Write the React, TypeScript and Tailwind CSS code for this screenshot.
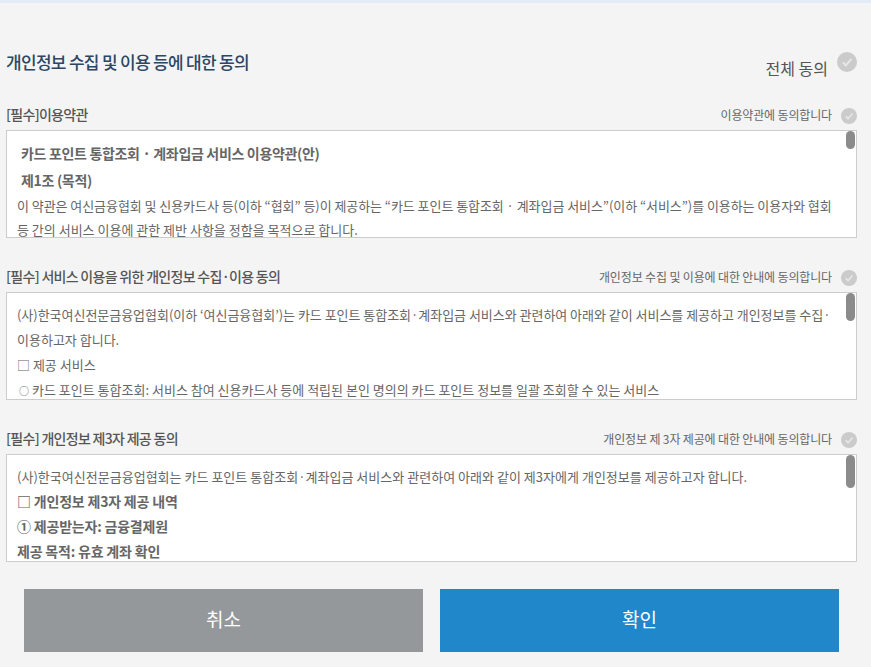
const font = "font-['Noto_Sans_CJK_KR','Noto_Sans',sans-serif]";

function CheckIcon({ big }: { big?: boolean }) {
  return (
    <svg className={big ? 'w-5 h-5' : 'w-4 h-4 mt-[2px]'} viewBox="0 0 20 20">
      <circle cx="10" cy="10" r="10" fill="#cbcbcb" />
      <path d="M5.8 10.2l3 3.2 5.6-6.6" fill="none" stroke="#e6e6e6" strokeWidth="2" />
    </svg>
  );
}

function Section({
  title,
  agree,
  thumb,
  children,
}: {
  title: string;
  agree: string;
  thumb: string;
  children: React.ReactNode;
}) {
  return (
    <section className="h-[162px]">
      <div className="h-[30px] flex items-center justify-between pr-[14px] pb-[1px]">
        <h3 className="text-[14px] font-medium tracking-[-0.7px] text-[#555]">{title}</h3>
        <div className="flex items-center gap-[9px]">
          <span className="text-[12px] tracking-[-0.15px] text-[#666]">{agree}</span>
          <CheckIcon />
        </div>
      </div>
      <div className="relative h-[108px] mr-[14px] bg-white border border-[#cccccc] overflow-hidden text-[13px] text-[#666] leading-[25px]">
        <div className={`absolute top-0 right-[1px] w-[9px] rounded-full bg-[#8b8b8b] ${thumb}`} />
        {children}
      </div>
    </section>
  );
}

export default function App() {
  return (
    <div className={`w-[871px] h-[667px] bg-[#f4f4f4] overflow-hidden pl-[6px] border-t-[3px] border-[#e3ebf7] ${font}`}>
      <div className="h-[97px] flex justify-between pr-[14px]">
        <h2 className="mt-[45px] text-[17px] font-medium leading-[28px] tracking-[-0.7px] text-[#2c4664]">
          개인정보 수집 및 이용 등에 대한 동의
        </h2>
        <div className="mt-[47px] h-[24px] flex items-center gap-[9px]">
          <span className="mt-[11px] text-[16px] text-[#555]">전체 동의</span>
          <CheckIcon big />
        </div>
      </div>
      <Section title="[필수]이용약관" agree="이용약관에 동의합니다" thumb="h-[18px]">
        <div className="pl-[14px] pt-[9px] font-bold text-[14px] leading-[27px] tracking-[-0.33px]">
          <p>카드 포인트 통합조회 · 계좌입금 서비스 이용약관(안)</p>
          <p>제1조 (목적)</p>
        </div>
        <p className="pl-[10px] pr-[16px] -mt-[1px] whitespace-nowrap tracking-[-0.06px]">
          이 약관은 여신금융협회 및 신용카드사 등(이하 “협회” 등)이 제공하는 “카드 포인트 통합조회 · 계좌입금 서비스”(이하 “서비스”)를 이용하는 이용자와 협회
        </p>
        <p className="pl-[10px] -mt-[1px] whitespace-nowrap">
          등 간의 서비스 이용에 관한 제반 사항을 정함을 목적으로 합니다.
        </p>
      </Section>
      <Section title="[필수] 서비스 이용을 위한 개인정보 수집·이용 동의" agree="개인정보 수집 및 이용에 대한 안내에 동의합니다" thumb="h-[28px]">
        <div className="pl-[10px] pt-[9px] whitespace-nowrap">
          <p className="tracking-[-0.03px]">(사)한국여신전문금융업협회(이하 ‘여신금융협회’)는 카드 포인트 통합조회·계좌입금 서비스와 관련하여 아래와 같이 서비스를 제공하고 개인정보를 수집·</p>
          <p>이용하고자 합니다.</p>
          <p>□ 제공 서비스</p>
          <p>
            <span className="inline-block w-[15px] pl-[2px] text-[10px]">○</span>카드 포인트 통합조회: 서비스 참여 신용카드사 등에 적립된 본인 명의의 카드 포인트 정보를 일괄 조회할 수 있는 서비스
          </p>
        </div>
      </Section>
      <Section title="[필수] 개인정보 제3자 제공 동의" agree="개인정보 제 3자 제공에 대한 안내에 동의합니다" thumb="h-[33px]">
        <div className="pl-[10px] pt-[9px] whitespace-nowrap">
          <p className="tracking-[0.02px]">(사)한국여신전문금융업협회는 카드 포인트 통합조회·계좌입금 서비스와 관련하여 아래와 같이 제3자에게 개인정보를 제공하고자 합니다.</p>
          <div className="font-bold text-[14px] leading-[25px] tracking-[-0.2px]">
            <p>□ 개인정보 제3자 제공 내역</p>
            <p>① 제공받는자: 금융결제원</p>
            <p>제공 목적: 유효 계좌 확인</p>
          </div>
        </div>
      </Section>
      <div className="flex gap-[17px] pl-[18px] mt-[3px]">
        <button className="w-[399px] h-[63px] pb-[3px] bg-[#94989b] text-white text-[19px]">취소</button>
        <button className="w-[399px] h-[63px] pb-[3px] bg-[#2087cb] text-white text-[19px]">확인</button>
      </div>
    </div>
  );
}
